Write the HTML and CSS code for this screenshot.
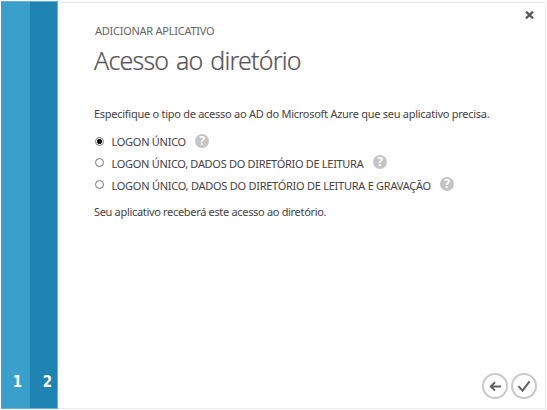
FILE: index.html
```html
<!DOCTYPE html>
<html lang="pt-BR">
<head>
<meta charset="utf-8">
<title>Adicionar aplicativo</title>
<link rel="stylesheet" href="styles.css">
</head>
<body>
<div class="dialog">
  <nav class="steps">
    <div class="step step-one">1</div>
    <div class="step step-two">2</div>
  </nav>
  <main class="panel">
    <button class="close" aria-label="Fechar"><svg width="9" height="8" viewBox="0 0 9 8"><path d="M1 .6 8 7.4M8 .6 1 7.4"/></svg></button>
    <p class="eyebrow">ADICIONAR APLICATIVO</p>
    <h1 class="title">Acesso ao diretório</h1>
    <p class="prompt">Especifique o tipo de acesso ao AD do Microsoft Azure que seu aplicativo precisa.</p>
    <div class="options">
      <div class="option"><span class="radio checked"></span><span class="label label-a">LOGON ÚNICO</span><span class="help">?</span></div>
      <div class="option"><span class="radio raised"></span><span class="label label-b">LOGON ÚNICO, DADOS DO DIRETÓRIO DE LEITURA</span><span class="help raised">?</span></div>
      <div class="option"><span class="radio raised"></span><span class="label label-c">LOGON ÚNICO, DADOS DO DIRETÓRIO DE LEITURA E GRAVAÇÃO</span><span class="help raised">?</span></div>
    </div>
    <p class="note">Seu aplicativo receberá este acesso ao diretório.</p>
    <div class="actions">
      <svg class="action" viewBox="0 0 26 26"><circle cx="13" cy="13" r="12"/><path d="M19 13.4H9M13 9.2 8.8 13.4 13 17.6"/></svg>
      <svg class="action" viewBox="0 0 26 26"><circle cx="13" cy="13" r="12"/><path d="M7.5 13.2 11.5 17.6 18.6 8.4"/></svg>
    </div>
  </main>
</div>
</body>
</html>
```
FILE: styles.css
```css
* { box-sizing: border-box; }
body {
  margin: 0;
  padding: 1px 1px 1px;
  height: 410px;
  background: #fff;
  color: #454146;
  font-family: "Noto Sans", "Open Sans", sans-serif;
  font-size: 11px;
  overflow: hidden;
}
p, h1 { margin: 0; white-space: nowrap; }
.dialog { display: flex; width: 545px; height: 408px; }
.steps { display: flex; width: 57px; border: 1px solid #62b2d4; border-width: 1px 1px 1px 0; }
.step {
  display: flex;
  align-items: flex-end;
  justify-content: center;
  padding-bottom: 16px;
  color: #fff;
  font-family: "DejaVu Sans Condensed", "DejaVu Sans", sans-serif;
  font-size: 15px;
  font-weight: 700;
  font-stretch: condensed;
  line-height: 20px;
}
.step-one { width: 29px; padding-left: 4px; background: #3a9fca; }
.step-two { width: 27px; padding-left: 8px; background: #1f84b1; }
.panel {
  position: relative;
  flex: 1;
  display: flex;
  flex-direction: column;
  margin-top: 1px;
  padding: 21px 8px 7px 36px;
  border: 1px solid #ebebeb;
  border-left: 0;
}
.close { position: absolute; top: 8px; right: 11px; width: 9px; height: 8px; padding: 0; border: 0; background: none; }
.close svg { display: block; fill: none; stroke: #555; stroke-width: 2.2; }
.eyebrow { padding-left: 1px; line-height: 14px; letter-spacing: -0.26px; color: #656366; }
.title { margin-top: 4px; font: 300 25px/36px "Noto Sans", "Open Sans", sans-serif; letter-spacing: -0.8px; word-spacing: 2px; color: #56535a; -webkit-text-stroke: 0.2px #56535a; }
.prompt { margin-top: 28px; line-height: 16px; letter-spacing: -0.27px; }
.options { margin-top: 8px; }
.option { display: flex; align-items: center; height: 22px; }
.radio { width: 9px; height: 9px; margin: 0 8px 0 1px; border: 1px solid #777; border-radius: 50%; background: #fff; }
.radio.checked { background: radial-gradient(circle, #111 0 2.2px, #fff 2.9px); }
.label { margin-left: -0.5px; white-space: nowrap; }
.label-a { width: 74px; letter-spacing: -0.27px; }
.label-b { width: 252px; letter-spacing: -0.3px; }
.label-c { width: 319px; letter-spacing: -0.26px; }
.help {
  width: 14px;
  height: 14px;
  margin: 0 0 1px 9.5px;
  border-radius: 50%;
  background: #c4c4c4;
  color: #fff;
  font-size: 12px;
  font-weight: 700;
  line-height: 14px;
  text-align: center;
}
.radio.raised { margin-bottom: 2px; }
.help.raised { margin-bottom: 3px; }
.note { margin-top: 8px; line-height: 16px; letter-spacing: -0.32px; }
.actions { display: flex; gap: 3px; margin-top: auto; justify-content: flex-end; }
.action { width: 26px; height: 26px; margin-bottom: 2px; fill: none; stroke: #626262; stroke-width: 2; }
.action circle { stroke: #c8c8c8; }
```
